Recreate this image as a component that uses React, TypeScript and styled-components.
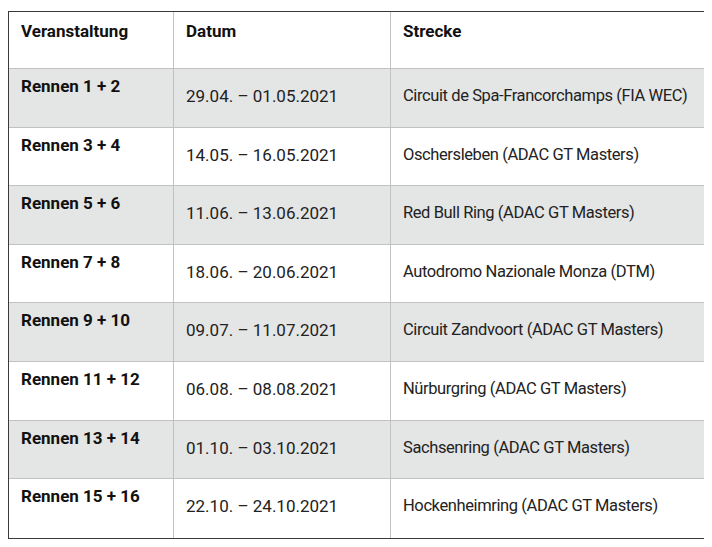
import React from 'react';
import styled, { createGlobalStyle } from 'styled-components';

const GlobalStyle = createGlobalStyle`
    body {
        margin: 8px;
        background: #fff;
        font-family: Roboto, 'Liberation Sans', sans-serif;
        color: #1f1f1f;
    }
`;

const races = [
    { event: 'Rennen 1 + 2', date: '29.04. – 01.05.2021', track: 'Circuit de Spa-Francorchamps (FIA WEC)' },
    { event: 'Rennen 3 + 4', date: '14.05. – 16.05.2021', track: 'Oschersleben (ADAC GT Masters)' },
    { event: 'Rennen 5 + 6', date: '11.06. – 13.06.2021', track: 'Red Bull Ring (ADAC GT Masters)' },
    { event: 'Rennen 7 + 8', date: '18.06. – 20.06.2021', track: 'Autodromo Nazionale Monza (DTM)' },
    { event: 'Rennen 9 + 10', date: '09.07. – 11.07.2021', track: 'Circuit Zandvoort (ADAC GT Masters)' },
    { event: 'Rennen 11 + 12', date: '06.08. – 08.08.2021', track: 'Nürburgring (ADAC GT Masters)' },
    { event: 'Rennen 13 + 14', date: '01.10. – 03.10.2021', track: 'Sachsenring (ADAC GT Masters)' },
    { event: 'Rennen 15 + 16', date: '22.10. – 24.10.2021', track: 'Hockenheimring (ADAC GT Masters)' },
];

const Wrapper = styled.div`
    padding-top: 3px;
`;

const Table = styled.table`
    width: 697px;
    border: 1px solid #3a3a3a;
    border-spacing: 0;
    table-layout: fixed;
`;

const Row = styled.tr<{ $shaded?: boolean }>`
    background: ${(p) => (p.$shaded ? '#e4e5e5' : '#fff')};
`;

const HeadCell = styled.th<{ $width: number }>`
    width: ${(p) => p.$width}px;
    height: 57px;
    box-sizing: border-box;
    padding: 9px 12px 0;
    text-align: left;
    vertical-align: top;
    font-size: 17px;
    font-weight: 700;
    line-height: 20px;
    color: #111;
    border-right: 1px solid #c2c2c2;
    border-bottom: 1px solid #c2c2c2;
    &:last-child {
        border-right: none;
    }
`;

const EventCell = styled.td<{ $last?: boolean }>`
    height: 58.6px;
    box-sizing: border-box;
    padding: 7px 12px 0;
    vertical-align: top;
    font-size: 17px;
    font-weight: 700;
    line-height: 20px;
    color: #111;
    border-right: 1px solid #c2c2c2;
    border-bottom: ${(p) => (p.$last ? 'none' : '1px solid #c2c2c2')};
`;

// date and track columns: regular weight, sit lower in the row than the event name
const TextCell = styled.td<{ $last?: boolean; $end?: boolean }>`
    box-sizing: border-box;
    padding: 17px 12px 0;
    vertical-align: top;
    font-size: ${(p) => (p.$end ? '16.5px' : '17px')};
    letter-spacing: ${(p) => (p.$end ? '-0.4px' : '0')};
    line-height: 20px;
    white-space: nowrap;
    color: #222;
    border-right: ${(p) => (p.$end ? 'none' : '1px solid #c2c2c2')};
    border-bottom: ${(p) => (p.$last ? 'none' : '1px solid #c2c2c2')};
`;

export default function App() {
    return (
        <Wrapper>
            <GlobalStyle />
            <Table>
                <thead>
                    <tr>
                        <HeadCell $width={165}>Veranstaltung</HeadCell>
                        <HeadCell $width={217}>Datum</HeadCell>
                        <HeadCell $width={313}>Strecke</HeadCell>
                    </tr>
                </thead>
                <tbody>
                    {races.map((race, i) => {
                        const last = i === races.length - 1;
                        return (
                            <Row key={race.event} $shaded={i % 2 === 0}>
                                <EventCell $last={last}>{race.event}</EventCell>
                                <TextCell $last={last}>{race.date}</TextCell>
                                <TextCell $last={last} $end>
                                    {race.track}
                                </TextCell>
                            </Row>
                        );
                    })}
                </tbody>
            </Table>
        </Wrapper>
    );
}
